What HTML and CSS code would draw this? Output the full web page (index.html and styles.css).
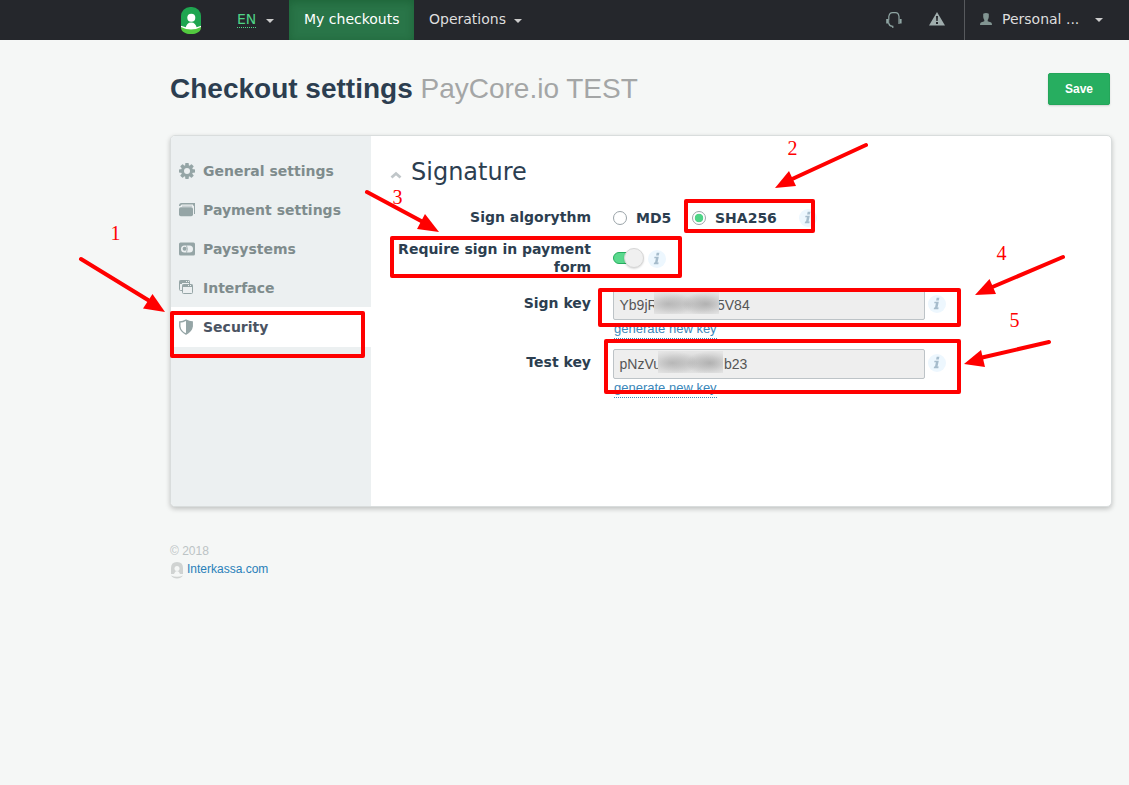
FILE: index.html
```html
<!DOCTYPE html>
<html lang="en">
<head>
<meta charset="utf-8">
<title>Checkout settings</title>
<link rel="stylesheet" href="styles.css">
</head>
<body>
<svg width="0" height="0" class="defs">
  <symbol id="info" viewBox="0 0 18 18">
    <circle cx="9" cy="9" r="9" fill="#edf7fe"/>
    <path d="M8.700 2.800h2.700l-.6 2.700H8.100z M6.500 6.800h4.300L9.500 12.600h1.200l-.4 1.700H5.700l.4-1.700h.9L7.900 8.300H6.200z" fill="#a6bccc"/>
  </symbol>
</svg>
<header class="topbar">
  <a class="brand"><svg width="20" height="28" viewBox="0 0 20 28">
    <rect width="20" height="27" rx="9" fill="#1fa550"/>
    <path d="M0 19.500Q10 25 20 19.500V21C19.500 25 15 27 10 27S.5 25 0 21" fill="#53c93f"/>
    <path d="M0 18.800L4.800 20.300C5.400 17.500 7 15.400 10.200 15.400S15 17.500 15.600 20.300L20 18.800v1.200Q10 25 0 20z" fill="#fff"/>
    <circle cx="10.300" cy="10.800" r="4" fill="#fff"/>
  </svg></a>
  <a class="lang"><span>EN</span><i class="caret"></i></a>
  <a class="tab">My checkouts</a>
  <a class="ops">Operations<i class="caret"></i></a>
  <div class="tools">
    <svg width="16" height="17" viewBox="0 0 16 17" fill="none" stroke="#8fa5a3">
      <path d="M2.800 7.500V4.500Q3.500.600 6.500.600h3Q12.500.600 13 4.500V12M2.800 11.500Q3.500 14.300 6.800 14.300V16" stroke-width="1.200"/>
      <path d="M1.200 7v4.500M14.600 7v4.500" stroke-width="2"/><path d="M2.700 7v5"/>
    </svg>
    <svg width="16" height="14" viewBox="0 0 16 14"><path d="M8 0l8 13.500H0z" fill="#a0adad"/><path d="M7 4h2l-.3 5H7.300zM7 10h2v2H7z" fill="#25272c"/></svg>
  </div>
  <a class="account">
    <svg width="12" height="12" viewBox="0 0 12 12" fill="#829592"><path d="M3.200.8Q6-.8 8.800.8V4Q8.500 6 7.700 7v1.200l3.500 1.200q.8.500.8 2.600H0q0-2.100.8-2.600l3.500-1.200V7Q3.500 6 3.200 4z"/></svg>
    <span>Personal ...</span><i class="caret"></i>
  </a>
</header>
<main class="page">
  <div class="heading">
    <h1>Checkout settings <small>PayCore.io TEST</small></h1>
    <button class="save">Save</button>
  </div>
  <section class="panel">
    <nav class="side">
      <a><svg viewBox="0 0 16 16"><g fill="#95a5a6"><rect x="6.200" width="3.600" height="16" rx=".7"/><rect x="6.200" width="3.600" height="16" rx=".7" transform="rotate(45 8 8)"/><rect x="6.200" width="3.600" height="16" rx=".7" transform="rotate(90 8 8)"/><rect x="6.200" width="3.600" height="16" rx=".7" transform="rotate(135 8 8)"/><circle cx="8" cy="8" r="6"/></g><circle cx="8" cy="8" r="3" fill="#ecf0f1"/></svg>General settings</a>
      <a><svg viewBox="0 0 16 16" fill="#95a5a6"><path d="M2.500 1H16V12h-1V4.200Q15 3.600 14 3.600V2.500H3Q1.500 2.500 1.500 4H0Q0 1 2.500 1z"/><path d="M3 4.200h10" stroke="#95a5a6" stroke-width=".6"/><rect y="5.200" width="14" height="9" rx="1.800"/></svg>Payment settings</a>
      <a><svg viewBox="0 0 16 16"><rect y="1.500" width="16" height="13" rx="1.500" fill="#95a5a6"/><rect x="2" y="4.500" width="12" height="7" rx="3.500" fill="#ecf0f1"/><circle cx="5.600" cy="7.800" r="2" fill="#95a5a6"/><path d="M7.500 4.500Q9.200 8 7.500 11.500" fill="none" stroke="#95a5a6" stroke-width=".8"/></svg>Paysystems</a>
      <a><svg viewBox="0 0 16 16"><path d="M3.500 10.500H1.500Q.5 10.500.5 9.500V1.500Q.5.500 1.500.5H9.500Q10.500.5 10.500 1.500V4" fill="none" stroke="#95a5a6"/><path d="M.5.500h10V3H3v1H.5z" fill="#95a5a6"/><rect x="3.500" y="4.500" width="10" height="9" rx="1" fill="#ecf0f1" stroke="#95a5a6"/><path d="M3.500 4.500h10V7h-10z" fill="#95a5a6"/><path d="M7 1.500h1m1 0h1M9 5.500h1m1 0h1" stroke="#ecf0f1"/></svg>Interface</a>
      <a class="active"><svg viewBox="0 0 16 16"><path d="M7 1.200Q10 3 13.200 3V7.500Q12.500 12.500 7 15Q1.500 12.500.8 7.500V3Q4 3 7 1.200z" fill="#fff" stroke="#95a5a6" stroke-width="1.400"/><path d="M7 1.200Q10 3 13.200 3V7.500Q12.500 12.500 7 15z" fill="#95a5a6"/></svg>Security</a>
    </nav>
    <div class="content">
      <h2><svg width="12" height="8" viewBox="0 0 12 8"><path d="M1.500 6.500L6 2.500l4.500 4" fill="none" stroke="#c0c6c9" stroke-width="2.800"/></svg>Signature</h2>
      <div class="row algo"><label>Sign algorythm</label>
        <div class="control"><i class="radio"></i><b class="md">MD5</b><i class="radio on"></i><b class="sha">SHA256</b><svg class="info"><use href="#info"/></svg></div></div>
      <div class="row require"><label>Require sign in payment form</label>
        <div class="control"><i class="switch"></i><svg class="info"><use href="#info"/></svg></div></div>
      <div class="row key"><label>Sign key</label>
        <div class="stack"><div class="control"><div class="field"><span>Yb9jR</span><i class="mask"></i><span>5V84</span></div><svg class="info"><use href="#info"/></svg></div><a class="gen">generate new key</a></div></div>
      <div class="row key"><label>Test key</label>
        <div class="stack"><div class="control"><div class="field test"><span>pNzVu</span><i class="mask"></i><span>b23</span></div><svg class="info"><use href="#info"/></svg></div><a class="gen">generate new key</a></div></div>
    </div>
  </section>
  <footer>
    <div>© 2018</div>
    <a><svg width="14" height="17" viewBox="0 0 14 17"><path d="M1 12V6Q1 0 7 0t6 6v6L10 12Q9 9 7 9T4 12z" fill="#d0d3d2"/><circle cx="7" cy="6.500" r="2.500" fill="#f5f7f6"/><path d="M1 13.500Q7 16 13 13.500Q11 16.500 7 16.500T1 13.500" fill="#d0d3d2"/></svg>Interkassa.com</a>
  </footer>
</main>
<svg class="notes" width="1129" height="785" viewBox="0 0 1129 785">
  <g fill="none" stroke="#f00" stroke-width="4" stroke-linejoin="round">
    <rect x="172" y="313" width="191" height="43"/>
    <rect x="686" y="201" width="127" height="30"/>
    <rect x="392" y="238" width="288" height="38"/>
    <rect x="600" y="290" width="359" height="35"/>
    <rect x="606" y="341" width="353" height="51"/>
  </g>
  <g stroke="#f00" stroke-width="4" stroke-linecap="round">
    <path d="M81 259L148 300M866 145L790 180M367 192L423 222M1063 257L990 288M1049 342L980 358"/>
  </g>
  <g fill="#f00">
    <path d="M165 312L143 308.500L152.500 294z"/>
    <path d="M775 188L789 171L796 186z"/>
    <path d="M439 232L417 229L425 214z"/>
    <path d="M975 295L989.500 279L996 294z"/>
    <path d="M964 364L981 350L985 367z"/>
  </g>
  <g fill="#f00" class="nums">
    <text x="110.500" y="240">1</text><text x="787.500" y="155">2</text><text x="392.500" y="204">3</text><text x="996.500" y="260">4</text><text x="1009.500" y="327">5</text>
  </g>
</svg>
</body>
</html>
```
FILE: styles.css
```css
* { box-sizing: border-box; }
body { margin: 0; height: 785px; overflow: hidden; position: relative; background: #f5f7f6; font-family: "DejaVu Sans", sans-serif; font-size: 14px; color: #2c3e50; }
svg { display: block; flex: none; }
.defs { display: none; }
.topbar { display: flex; height: 40px; background: #25272c; color: #dedede; line-height: 38px; }
.topbar a { display: flex; }
.brand { width: 221px; padding: 7px 0 0 181px; }
.lang { width: 68px; padding-left: 16px; color: #4fd487; }
.lang span { height: 17px; margin-top: 11px; line-height: 17px; border-bottom: 1px dotted #4fd487; }
.caret { width: 8px; height: 4px; margin: 19px 0 0 10px; border: 4px solid transparent; border-top-color: #ccc; border-bottom: 0; }
.tab { width: 125px; padding-left: 15px; background: #297548; color: #fff; box-shadow: inset 0 2px 8px rgba(0, 60, 20, .3); }
.ops { padding-left: 15px; }
.ops .caret { margin-left: 8px; }
.tools { display: flex; gap: 27px; margin-left: auto; padding: 12px 19px 0 0; }
.account { width: 165px; padding-left: 15px; border-left: 1px solid #57595d; }
.account svg { margin: 13px 10px 0 0; }
.account .caret { margin: 18px 0 0 16px; }
.page { width: 942px; margin-left: 170px; }
.heading { display: flex; justify-content: space-between; height: 95px; padding: 33px 2px 0 0; }
h1 { margin: 0; font: bold 28px/32px "Liberation Sans", sans-serif; }
h1 small { font-size: 28px; font-weight: normal; color: #a4a6a6; }
.save { width: 62px; height: 32px; border: 1px solid #24a65a; border-radius: 2px; background: #27ae60; color: #fff; font: bold 12px "Liberation Sans", sans-serif; box-shadow: 0 1px 2px rgba(0, 0, 0, .15); padding: 0; }
.panel { display: flex; height: 372px; border: 1px solid #d9dddd; border-radius: 5px; background: #fff; box-shadow: 0 2px 5px rgba(0, 0, 0, .22); }
.side { width: 200px; padding-top: 15px; background: #ecf0f1; border-radius: 4px 0 0 4px; }
.side a { display: flex; align-items: center; height: 39px; gap: 8px; padding-left: 8px; font-weight: bold; color: #7f8c8d; }
.side svg { width: 16px; height: 16px; }
.side a.active { height: 40px; background: #fff; color: #4b5463; }
.content { flex: 1; padding: 18px 0 0 19px; }
h2 { display: flex; gap: 9px; margin: 0; height: 52px; font-size: 24px; font-weight: normal; line-height: 36px; }
h2 svg { margin-top: 17px; }
.row { display: grid; grid-template-columns: 201px 1fr; column-gap: 22px; line-height: 18px; }
label { font-weight: bold; text-align: right; }
.control { display: flex; align-items: flex-start; }
.info { width: 18px; height: 18px; }
.algo { height: 34px; padding-top: 2px; }
.algo .control { padding-top: 1px; }
.radio { width: 14px; height: 14px; margin-top: 2px; border: 1px solid #9aa3a8; border-radius: 50%; background: #fff; }
.radio.on { background: radial-gradient(circle, #4fd487 4px, #fff 4.600px); }
.md { width: 56px; margin-left: 9px; }
.sha { width: 84px; margin-left: 9px; }
.require { height: 53px; }
.require .control { padding-top: 10px; }
.switch { display: flex; justify-content: flex-end; align-items: center; width: 29px; height: 12px; margin: 2px 6px 0 0; border: 1px solid #27ae60; border-radius: 6px; background: #5ad98d; }
.switch::after { content: ""; flex: none; width: 18px; height: 18px; margin-right: -3px; border: 1px solid #d6d6d6; border-radius: 50%; background: #f0f0f0; box-shadow: 0 1px 2px rgba(0, 0, 0, .15); }
.key { height: 59px; }
.key label { padding-top: 1px; }
.key .info { margin: 5px 0 0 3px; }
.stack { margin-top: -3px; }
.field { display: flex; width: 312px; height: 30px; padding-left: 5.500px; border: 1px solid #bdc3c7; border-radius: 2px; background: #eee; color: #555; font: 14px/28px "Liberation Sans", sans-serif; }
.field span:first-child { width: 34.500px; }
.field.test span:first-child { width: 38.500px; }
.field span:last-child { margin-left: -2px; }
.field.test span:last-child { margin-left: 1px; }
.mask { position: relative; width: 65px; height: 22px; margin-top: 1px; background: radial-gradient(ellipse 26px 12px at 14px 12px, rgba(165, 165, 165, .65), transparent), radial-gradient(ellipse 24px 12px at 52px 12px, rgba(160, 160, 160, .7), transparent), radial-gradient(ellipse 34px 11px at 33px 12px, rgba(175, 175, 175, .45), transparent), #e5e5e5; }
.gen { display: block; width: max-content; height: 19px; margin-left: 1px; line-height: 17px; font-family: "Liberation Sans", sans-serif; font-size: 13px; color: #3a87ba; border-bottom: 1px dotted #3a87ba; }
footer { margin-top: 35px; font: 12px/18px "Liberation Sans", sans-serif; color: #bcc3c5; }
footer a { display: flex; gap: 3px; color: #2980b9; }
footer svg { margin-top: 2px; }
.notes { position: absolute; left: 0; top: 0; }
.nums { font: 20px "Liberation Serif", serif; }
```
